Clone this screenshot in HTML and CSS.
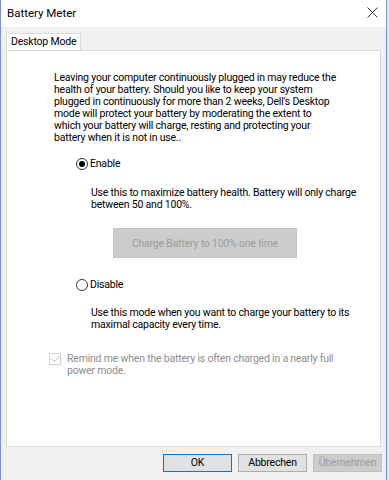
FILE: index.html
```html
<!DOCTYPE html>
<html lang="en">
<head>
    <meta charset="UTF-8">
    <title>Battery Meter</title>
    <link rel="stylesheet" href="styles.css">
</head>
<body>
    <div class="window">
        <div class="titlebar">
            <span class="title">Battery Meter</span>
            <svg class="close" width="11" height="11" viewBox="0 0 11 11">
                <path d="M0.5 0.5 L10.5 10.5 M10.5 0.5 L0.5 10.5" stroke="#333" stroke-width="1" fill="none"/>
            </svg>
        </div>
        <div class="content">
            <div class="tabs">
                <div class="tab">Desktop Mode</div>
            </div>
            <div class="panel">
                <p class="intro">Leaving your computer continuously plugged in may reduce the<br>health of your battery. Should you like to keep your system<br>plugged in continuously for more than 2 weeks, Dell's Desktop<br>mode will protect your battery by moderating the extent to<br>which your battery will charge, resting and protecting your<br>battery when it is not in use..</p>

                <label class="radio radio-enable">
                    <span class="radio-dot checked"></span>
                    <span>Enable</span>
                </label>
                <p class="desc desc-enable">Use this to maximize battery health. Battery will only charge between 50 and 100%.</p>
                <button class="charge-btn" disabled>Charge Battery to 100% one time</button>

                <label class="radio radio-disable">
                    <span class="radio-dot"></span>
                    <span>Disable</span>
                </label>
                <p class="desc desc-disable">Use this mode when you want to charge your battery to its maximal capacity every time.</p>

                <label class="check">
                    <span class="check-box">
                        <svg width="9" height="8" viewBox="0 0 9 8">
                            <path d="M0.5 4 L3.2 6.8 L8.5 0.8" stroke="#b8b8b8" stroke-width="1" fill="none"/>
                        </svg>
                    </span>
                    <span class="check-text">Remind me when the battery is often charged in a nearly full power mode.</span>
                </label>
            </div>
            <div class="buttons">
                <button class="btn btn-default">OK</button>
                <button class="btn">Abbrechen</button>
                <button class="btn" disabled>Übernehmen</button>
            </div>
        </div>
    </div>
</body>
</html>
```

FILE: styles.css
```css
body {
    margin: 0;
    width: 389px;
    height: 480px;
    background: #dfe4ee;
    font-family: Roboto, "Noto Sans", sans-serif;
    font-size: 10.5px;
    letter-spacing: -0.2px;
    color: #000;
    overflow: hidden;
}
.window {
    width: 385px;
    height: 480px;
    border-left: 1px solid #7a90dc;
    border-right: 1px solid #7a90dc;
    display: flex;
    flex-direction: column;
    background: #f0f0f0;
}
.titlebar {
    height: 27px;
    background: #fff;
    display: flex;
    align-items: center;
    justify-content: space-between;
    padding: 0 8px 0 6px;
    box-sizing: border-box;
    flex-shrink: 0;
}
.title {
    font-size: 11.5px;
    letter-spacing: 0;
    margin-top: -1px;
}
.close {
    margin-top: -3px;
}
.content {
    flex: 1;
    padding: 6px 5px 0 5px;
    display: flex;
    flex-direction: column;
}
.tabs {
    display: flex;
    height: 17px;
}
.tab {
    background: #fff;
    border: 1px solid #d9d9d9;
    border-bottom: none;
    padding: 0 4px 0 4px;
    line-height: 16px;
    white-space: nowrap;
}
.panel {
    background: #fff;
    border: 1px solid #d9d9d9;
    height: 397px;
    box-sizing: border-box;
    padding: 21px 0 0 0;
    width: 375px;
}
p {
    margin: 0;
    line-height: 12px;
}
.intro {
    margin-left: 47px;
}
.radio {
    display: flex;
    align-items: center;
    gap: 2px;
    margin-left: 69px;
    line-height: 12px;
}
.radio-enable {
    margin-top: 14px;
}
.radio-dot {
    width: 10px;
    height: 10px;
    border: 1px solid #333;
    border-radius: 50%;
    display: flex;
    align-items: center;
    justify-content: center;
}
.radio-dot.checked::after {
    content: "";
    width: 6px;
    height: 6px;
    border-radius: 50%;
    background: #000;
}
.desc {
    margin-left: 84px;
    width: 270px;
}
.desc-enable {
    margin-top: 17px;
}
.charge-btn {
    display: block;
    margin: 17px 0 0 106px;
    width: 184px;
    height: 30px;
    background: #cccccc;
    border: 1px solid #c4c4c4;
    color: #9d9d9d;
    font-family: inherit;
    font-size: 10.5px;
    letter-spacing: inherit;
    padding: 0;
}
.radio-disable {
    margin-top: 21px;
}
.desc-disable {
    margin-top: 16px;
}
.check {
    display: flex;
    align-items: flex-start;
    margin: 22px 0 0 42px;
    color: #8d8d8d;
    line-height: 12px;
}
.check-box {
    width: 10px;
    height: 10px;
    border: 1px solid #cfcfcf;
    display: flex;
    align-items: center;
    justify-content: center;
    flex-shrink: 0;
}
.check-text {
    margin-left: 6px;
    width: 270px;
}
.buttons {
    display: flex;
    justify-content: flex-end;
    gap: 6px;
    margin-top: 7px;
    width: 376px;
}
.btn {
    width: 69px;
    height: 18px;
    background: #e1e1e1;
    border: 1px solid #adadad;
    font-family: inherit;
    font-size: 10.5px;
    letter-spacing: inherit;
    color: #000;
    padding: 0;
    line-height: 14px;
}
.btn-default {
    border-color: #0078d7;
}
.btn:disabled {
    background: #cccccc;
    border-color: #bfbfbf;
    color: #9d9d9d;
}
```
